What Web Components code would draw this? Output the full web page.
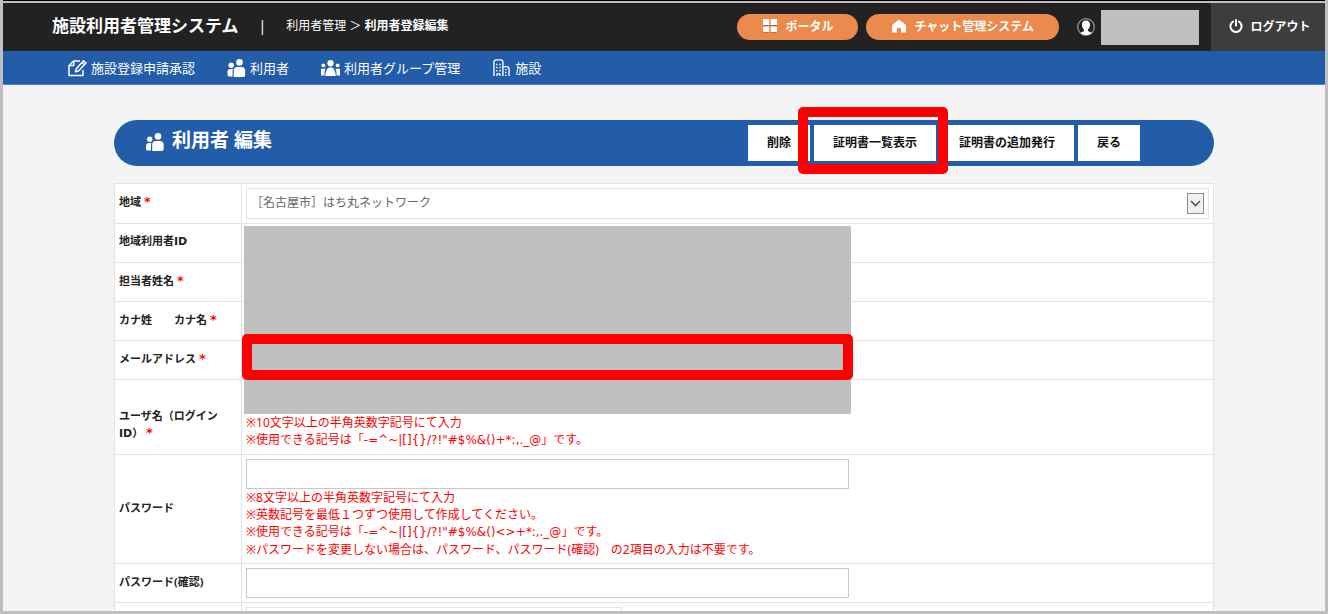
<!DOCTYPE html>
<html lang="ja">
<head>
<meta charset="utf-8">
<meta name="viewport" content="width=device-width, initial-scale=1">
<title>施設利用者管理システム</title>
<style>
  html, body { margin: 0; height: 100%; }
  body { font: 12px/17px "Noto Sans", "Noto Sans CJK JP", sans-serif; color: #222; }
</style>
</head>
<body>
<app-frame>
  <app-header slot="top"></app-header>
  <app-nav slot="top">
    <nav-item icon="edit" href="#approve">施設登録申請承認</nav-item>
    <nav-item icon="users" href="#users">利用者</nav-item>
    <nav-item icon="group" href="#groups">利用者グループ管理</nav-item>
    <nav-item icon="building" href="#facilities">施設</nav-item>
  </app-nav>
  <title-bar>
    利用者 編集
    <action-button slot="actions">削除</action-button>
    <action-button slot="actions" highlight>証明書一覧表示</action-button>
    <action-button slot="actions">証明書の追加発行</action-button>
    <action-button slot="actions">戻る</action-button>
  </title-bar>
  <user-form></user-form>
</app-frame>

<script>
const define = (name, render) => customElements.define(name, class extends HTMLElement {
  constructor() {
    super();
    this.attachShadow({ mode: 'open' });
  }
  connectedCallback() {
    this.shadowRoot.innerHTML = render(this);
  }
});

const icons = {
  edit: ['0 0 19 18', '<g fill="none" stroke="#fff" stroke-width="1.5" stroke-linejoin="round"><path d="M12 2H5.500L1 6.500V16.500H15V11"/><path d="M5.800 2V6.500H1.300"/><path d="M7.500 12.800L8.300 9.800L15.500 1.800L18 4L10.500 12Z"/><path d="M14 3.500L16.500 5.700"/></g>'],
  users: ['0 0 18 18', '<g fill="#fff"><circle cx="3.700" cy="6.200" r="2.700"/><circle cx="12" cy="3.400" r="3.300"/><path d="M0 17V13Q0 10 3 10H5.500Q5 11 5 13V17.500H2Q0 17.500 0 16Z"/><path d="M6.200 18V11.500Q6.200 8 9.700 8H13.700Q17.700 8 17.700 12V16Q17.700 18 15.700 18Z"/></g>'],
  group: ['0 0 20 18', '<g fill="#fff"><circle cx="10" cy="4" r="3.300"/><circle cx="2.500" cy="6.200" r="2"/><circle cx="17.500" cy="6.200" r="2"/><path d="M4.500 17.500V15L6 11Q6.800 8.500 9 8.500H11Q13.200 8.500 14 11L15.500 15V17.500Z"/><path d="M0 17V9.800H4.800L3.700 13V17Z"/><path d="M20 17V9.800H15.200L16.300 13V17Z"/></g>'],
  building: ['0 0 18 19', '<g fill="none" stroke="#fff" stroke-width="1.400"><path d="M1 18V3.500Q1 1 3.500 1H8Q10.500 1 10.500 3.500V18"/><path d="M10.500 8H14Q17 8 17 10.500V18"/></g><g fill="#fff"><path d="M3.300 5h1.500v1.500h-1.500zM6.700 5h1.500v1.500h-1.500zM3.300 8.300h1.500v1.500h-1.500zM6.700 8.300h1.500v1.500h-1.500zM3.300 11.600h1.500v1.500h-1.500zM6.700 11.600h1.500v1.500h-1.500zM3.500 15h4.500v3h-1.300v-1.700h-1.900v1.700h-1.300zM12.800 10.500h1.500v1.500h-1.500zM12.800 13.500h1.500v1.500h-1.500zM12.800 16.500h1.500v1.500h-1.500z"/></g>'],
  tiles: ['0 0 14 14', '<path fill="#fff" d="M0 0H6.200V6H0ZM7.800 0H14V6H7.800ZM0 7.500H6.200V13.500H0ZM7.800 7.500H14V13.500H7.800Z"/><path stroke="#8b6a58" d="M0 6.500H6.200M7.800 6.500H14M0 13.700H6.200M7.800 13.700H14"/>'],
  home: ['0 0 14 13', '<path fill="#fff" d="M7 0L14 5.500V13H9V10Q9 8 7 8T5 10V13H0V5.500Z"/>'],
  avatar: ['0 0 18 18', '<circle cx="9" cy="9" r="8.300" fill="#222" stroke="#999" stroke-width="1.200"/><path fill="#fff" d="M9 2.500C12 2.500 13.200 4.500 13 7.200C12.900 9 12 10.500 11 11.500V13L14.800 15C12 17.800 6 17.800 3.200 15L7 13V11.500C6 10.500 5.100 9 5 7.200C4.800 4.500 6 2.500 9 2.500Z"/>'],
  power: ['0 0 14 14', '<g fill="none" stroke="#fff" stroke-width="2" stroke-linecap="round"><path d="M4 2.600A5.600 5.600 0 1 0 10 2.600"/><path d="M7 1V6.500"/></g>'],
};

define('app-icon', host => {
  const [box, shapes] = icons[host.getAttribute('name')];
  return `<style>
  :host { display: block; flex: none; }
  svg { display: block; width: 100%; height: 100%; }
</style><svg viewBox="${box}" aria-hidden="true">${shapes}</svg>`;
});

define('app-frame', () => `<style>
  :host { display: flex; flex-direction: column; box-sizing: border-box; height: 100vh; overflow: hidden;
    border: 3px solid #bfbfbf; border-top: 0; background: #f4f4f4; }
  .edge { flex: none; height: 1px; background: #000; }
  .top { flex: none; border-top: 2px solid #bfbfbf; }
  main { flex: 1; min-height: 0; overflow: auto; scrollbar-width: none; padding: 35px 16px 0; }
  .content { max-width: 1100px; margin: 0 auto; }
</style>
<div class="edge"></div>
<div class="top"><slot name="top"></slot></div>
<main><div class="content"><slot></slot></div></main>`);

define('app-header', () => `<style>
  :host { display: flex; align-items: stretch; height: 48px; background: #222; color: #fff; }
  .left { display: flex; align-items: center; flex: 1; padding: 0 0 3px 49px; white-space: nowrap; }
  h1 { margin: 0; font-size: 17px; line-height: 24px; font-weight: 700; }
  .bar { margin: 0 20px; font-size: 14px; }
  nav a { color: #fff; text-decoration: none; }
  nav b { font-weight: 700; }
  .right { display: flex; align-items: center; gap: 8px; }
  .account { display: flex; align-items: center; gap: 6px; margin: 0 12px 0 10px; }
  .account app-icon { width: 18px; height: 18px; }
  .name { width: 98px; height: 35px; background: #bfbfbf; }
  .logout { display: flex; align-items: center; justify-content: center; gap: 7px; width: 114px; height: 48px;
    border: 0; padding: 0 0 3px 4px; background: #3d3d3d; color: #fff; font-family: inherit; font-size: 12px; font-weight: 700; }
  .logout app-icon { width: 14px; height: 14px; }
</style>
<div class="left">
  <h1>施設利用者管理システム</h1><span class="bar">|</span>
  <nav><a href="#users">利用者管理</a> ＞ <b>利用者登録編集</b></nav>
</div>
<div class="right">
  <pill-link icon="tiles" href="#portal">ポータル</pill-link>
  <pill-link icon="home" href="#chat">チャット管理システム</pill-link>
  <div class="account"><app-icon name="avatar"></app-icon><span class="name"></span></div>
</div>
<button class="logout" type="button"><app-icon name="power"></app-icon>ログアウト</button>`);

define('pill-link', host => `<style>
  :host { display: block; }
  a { display: flex; align-items: center; gap: 8px; box-sizing: border-box; height: 26px; padding: 0 25px 2px 26px; border-radius: 13px;
    background: #ec8a4e; color: #fff; font-weight: 700; text-decoration: none; white-space: nowrap; }
  app-icon { width: 14px; height: 14px; }
</style>
<a href="${host.getAttribute('href')}"><app-icon name="${host.getAttribute('icon')}"></app-icon><slot></slot></a>`);

define('app-nav', () => `<style>
  :host { display: block; background: #235ca8; color: #fff; border-bottom: 1px solid #4a7fc4; }
  nav { display: flex; align-items: center; gap: 32px; height: 33px; padding-left: 65px; }
</style>
<nav><slot></slot></nav>`);

define('nav-item', host => `<style>
  :host { display: block; }
  a { display: flex; align-items: center; gap: 4px; color: #fff; font-size: 13px; line-height: 20px; text-decoration: none; white-space: nowrap; }
  app-icon { width: 19px; height: 18px; }
</style>
<a href="${host.getAttribute('href')}"><app-icon name="${host.getAttribute('icon')}"></app-icon><slot></slot></a>`);

define('title-bar', () => `<style>
  :host { display: flex; align-items: center; box-sizing: border-box; height: 46px; margin-bottom: 17px;
    padding: 0 74px 0 32px; border-radius: 23px; background: #235ca8; color: #fff; }
  h2 { display: flex; align-items: center; gap: 8px; flex: 1; margin: 0; padding-bottom: 2px; font-size: 19px; line-height: 26px; font-weight: 700; white-space: nowrap; }
  h2 span { padding-bottom: 4px; }
  app-icon { width: 18px; height: 18px; }
  .actions { display: flex; gap: 4px; }
</style>
<h2><app-icon name="users"></app-icon><span><slot></slot></span></h2>
<div class="actions"><slot name="actions"></slot></div>`);

define('action-button', () => `<style>
  :host { display: block; position: relative; }
  :host([highlight]) { z-index: 1; }
  button { display: block; height: 36px; padding: 0 19px 2px; border: 0; background: #fff; color: #111;
    font-family: inherit; font-size: 12px; font-weight: 700; white-space: nowrap; }
  :host([highlight])::after { content: ""; position: absolute; inset: -18px -12px -13px -16px;
    border: 10px solid #f00; border-radius: 5px; pointer-events: none; }
</style>
<button type="button"><slot></slot></button>`);

define('user-form', () => `<style>
  :host { display: block; position: relative; }
  table { width: 100%; border-collapse: separate; border-spacing: 0; background: #fff;
    border: 1px solid #e2e4e4; border-bottom: 0; table-layout: fixed; }
  col:first-child { width: 127px; }
  th, td { box-sizing: border-box; height: 39px; padding: 4px; border-bottom: 1px solid #e2e4e4; }
  th { padding-bottom: 8px; border-right: 1px solid #e2e4e4; text-align: left; font-size: 11px; line-height: 17px; font-weight: 700; vertical-align: middle; }
  td { vertical-align: top; color: #f00; }
  .user th, .user td { height: 75px; }
  .user th { padding-top: 22px; }
  .pass th, .pass td { height: 109px; }
  .req { color: #f00; font-family: "DejaVu Sans", sans-serif; font-size: 13px; line-height: 15px; }
  .latin { font-family: "DejaVu Sans", sans-serif; }
  input { display: block; box-sizing: border-box; width: 603px; max-width: 100%; height: 30px; margin: 0;
    padding: 0 6px; border: 1px solid #c8c8c8; background: #fff; font: inherit; }
  p { margin: 0; line-height: 17px; }
  .pick { position: relative; }
  select { display: block; appearance: none; box-sizing: border-box; width: 100%; height: 31px; margin: 0;
    padding: 0 30px 2px 4px; border: 1px solid #e4e4e4; border-radius: 0; background: #fff; color: #666; font: inherit; }
  select.short { width: 376px; }
  .arrow { position: absolute; right: 5px; top: 5px; box-sizing: border-box; width: 17px; height: 21px;
    border: 1px solid #8c8c8c; background: #f0f0f0; pointer-events: none; }
  .arrow svg { display: block; width: 15px; height: 19px; }
  .mask { position: absolute; left: 130px; top: 43px; width: 607px; height: 188px; background: #bfbfbf; }
  .mark { position: absolute; left: 128px; top: 151px; box-sizing: border-box; width: 611px; height: 46px;
    border: 10px solid #f00; border-radius: 5px; pointer-events: none; }
</style>
<table>
  <colgroup><col><col></colgroup>
  <tbody>
    <tr><th><label for="area">地域</label> <span class="req">*</span></th>
      <td><div class="pick"><select id="area"><option>［名古屋市］はち丸ネットワーク</option></select>
        <span class="arrow"><svg viewBox="0 0 15 19"><path d="M3 7L7.500 11.500L12 7" fill="none" stroke="#555" stroke-width="1.600"/></svg></span></div></td></tr>
    <tr><th>地域利用者<span class="latin">ID</span></th><td></td></tr>
    <tr><th><label for="person">担当者姓名</label> <span class="req">*</span></th><td><input id="person"></td></tr>
    <tr><th><label for="kana">カナ姓　　カナ名</label> <span class="req">*</span></th><td><input id="kana"></td></tr>
    <tr><th><label for="mail">メールアドレス</label> <span class="req">*</span></th><td><input id="mail" type="email"></td></tr>
    <tr class="user"><th><label for="login">ユーザ名（ログイン<br><span class="latin">ID</span>）</label> <span class="req">*</span></th>
      <td><input id="login"><p>※10文字以上の半角英数字記号にて入力</p><p>※使用できる記号は「<span class="latin">-=^~|[]{}/?!"#$%&amp;()+*:,._@</span>」です。</p></td></tr>
    <tr class="pass"><th><label for="pw">パスワード</label></th>
      <td><input id="pw" type="password"><p>※8文字以上の半角英数字記号にて入力</p><p>※英数記号を最低１つずつ使用して作成してください。</p><p>※使用できる記号は「<span class="latin">-=^~|[]{}/?!"#$%&amp;()&lt;&gt;+*:,._@</span>」です。</p><p>※パスワードを変更しない場合は、パスワード、パスワード(確認)　の2項目の入力は不要です。</p></td></tr>
    <tr><th><label for="pw2">パスワード(確認)</label></th><td><input id="pw2" type="password"></td></tr>
    <tr><th></th><td><select class="short" aria-label="選択"></select></td></tr>
  </tbody>
</table>
<div class="mask"></div>
<div class="mark"></div>`);
</script>
</body>
</html>
